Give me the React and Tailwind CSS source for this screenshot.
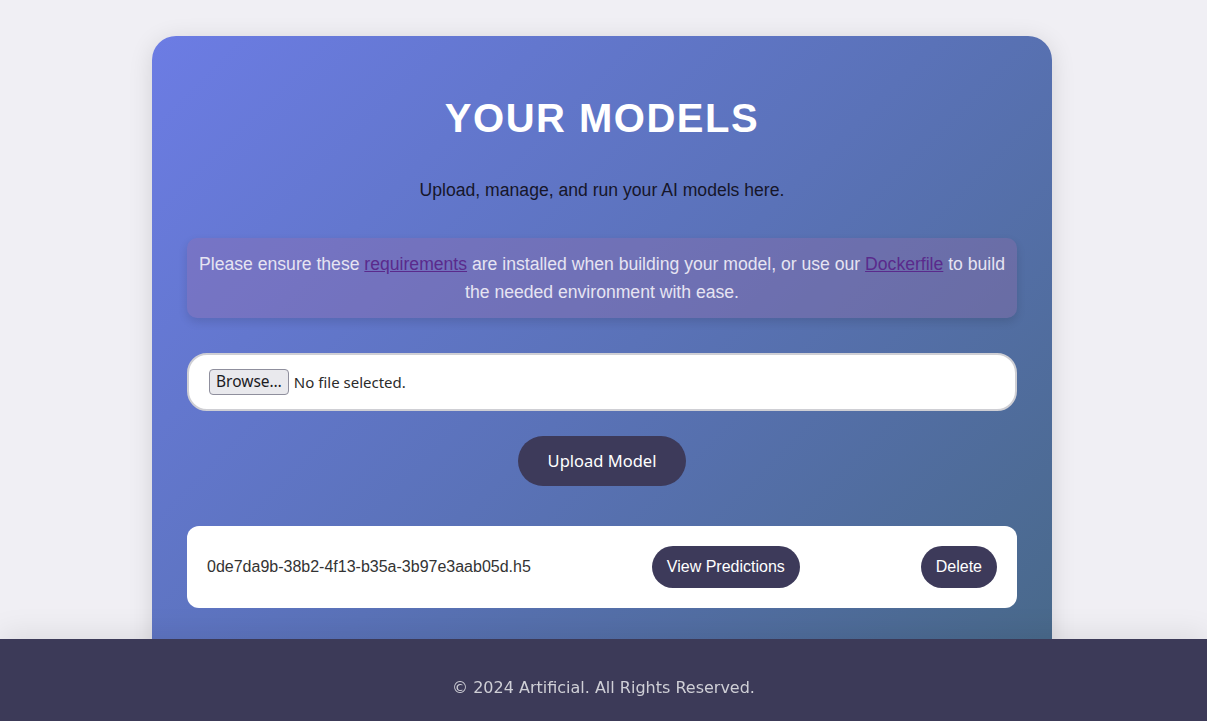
import React from "react";

const models = ["0de7da9b-38b2-4f13-b35a-3b97e3aab05d.h5"];

export default function App() {
  return (
    <div className="min-h-[721px] bg-[#f0eff4] font-['Liberation_Sans',Arial,sans-serif]">
      {/* main card */}
      <div className="pt-[36px] pl-[152px]">
        <div className="w-[900px] h-[680px] rounded-[24px] bg-[linear-gradient(135deg,#6c7ce4_0%,#5a72b8_50%,#476886_100%)] shadow-[0_4px_24px_rgba(0,0,0,0.12)] pt-[59px] px-[35px]">
          <h1 className="text-center text-white font-bold text-[40px] leading-[46px] tracking-[1.5px]">
            YOUR MODELS
          </h1>
          <p className="mt-[39px] text-center text-[17.6px] leading-[21px] text-[#16162a]">
            Upload, manage, and run your AI models here.
          </p>

          {/* requirements note */}
          <div className="mt-[37px] rounded-[10px] bg-[rgba(150,110,170,0.35)] shadow-[0_4px_10px_rgba(0,0,0,0.12)] px-[12px] py-[12px] text-center text-[17.6px] leading-[28px] text-[#e6e4f2]">
            Please ensure these{" "}
            <a href="#" className="underline text-[#5a2a8c]">requirements</a>{" "}
            are installed when building your model, or use our{" "}
            <a href="#" className="underline text-[#5a2a8c]">Dockerfile</a>{" "}
            to build the needed environment with ease.
          </div>

          {/* file picker */}
          <div className="mt-[35px] h-[58px] rounded-[20px] border-2 border-[#cfcfd4] bg-white flex items-center pl-[20px] font-['Noto_Sans',sans-serif] text-[15px]">
            <span className="h-[26px] px-[6px] flex items-center rounded-[4px] border border-[#8f8f9d] bg-[#e9e9ed] text-[#1b1b1f] text-[15.5px]">
              Browse…
            </span>
            <span className="ml-[5px] text-[#2b2b2b]">No file selected.</span>
          </div>

          <div className="mt-[25px] flex justify-center">
            <button className="w-[168px] h-[50px] rounded-full bg-[#3d3a5a] text-white text-[16.5px] font-['Noto_Sans',sans-serif]">
              Upload Model
            </button>
          </div>

          {/* model list */}
          <div className="mt-[40px] flex flex-col gap-4">
            {models.map((m) => (
              <div key={m} className="h-[82px] rounded-[12px] bg-white px-[20px] flex items-center justify-between">
                <span className="text-[16px] text-[#333]">{m}</span>
                <button className="h-[42px] px-[15px] rounded-full bg-[#3d3a5a] text-white text-[16px]">
                  View Predictions
                </button>
                <button className="h-[42px] px-[15px] rounded-full bg-[#3d3a5a] text-white text-[16px]">
                  Delete
                </button>
              </div>
            ))}
          </div>
        </div>
      </div>

      {/* footer */}
      <footer className="fixed bottom-0 left-0 right-0 h-[82px] bg-[#3c3a58] shadow-[0_-6px_30px_rgba(0,0,0,0.08)] flex justify-center pt-[37px]">
        <p className="text-[16px] leading-[24px] text-[#cfcfd6] font-['DejaVu_Sans',sans-serif]">
          © 2024 Artificial. All Rights Reserved.
        </p>
      </footer>
    </div>
  );
}
